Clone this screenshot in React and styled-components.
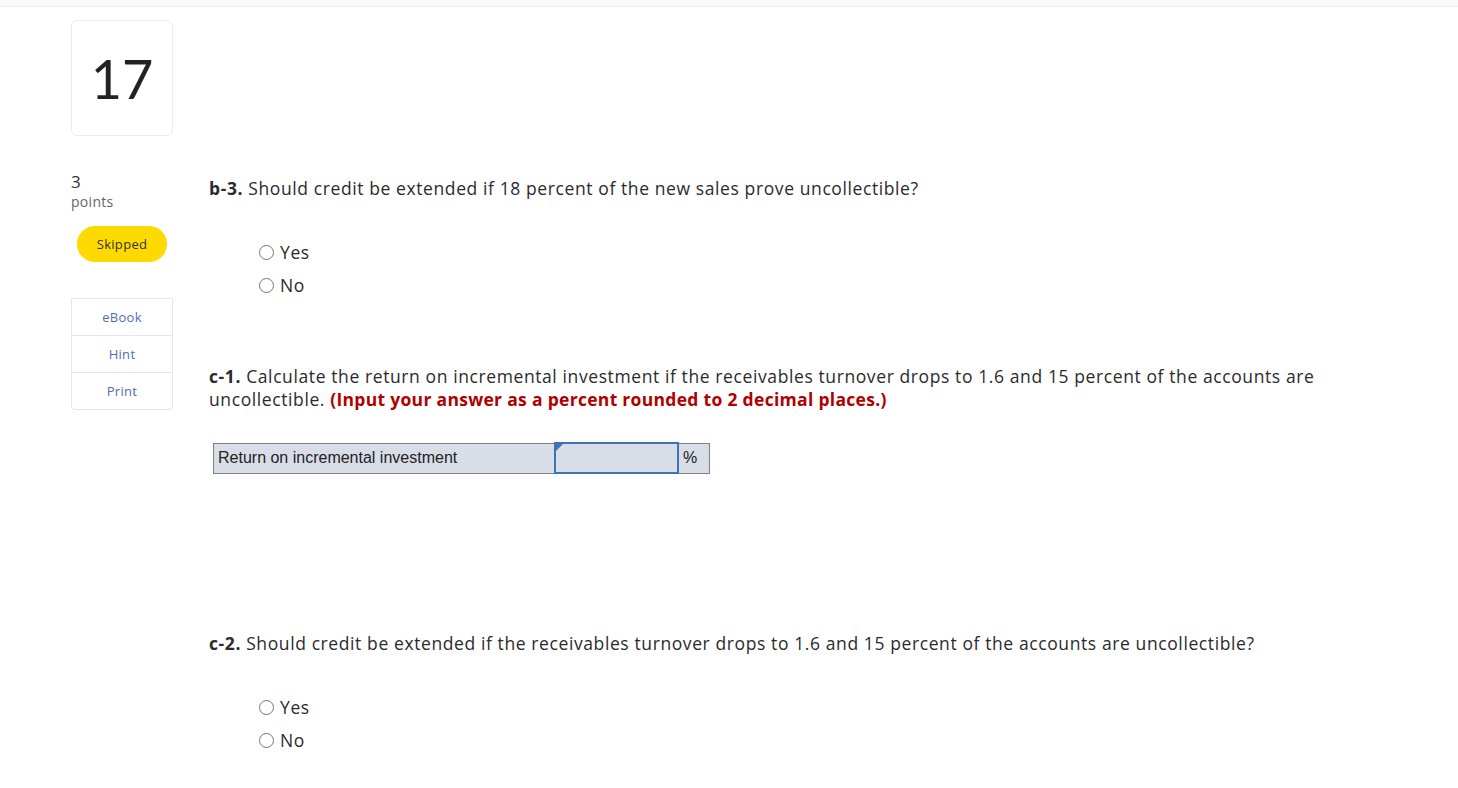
import React from "react";
import styled, { createGlobalStyle } from "styled-components";

const GlobalStyle = createGlobalStyle`
	body {
		margin: 0;
		background: #fff;
		font-family: "Open Sans", "Liberation Sans", sans-serif;
		color: #222;
	}
`;

const TopBar = styled.div`
	height: 6px;
	background: #fafafa;
	border-bottom: 1px solid #ececec;
`;

const Page = styled.main`
	padding: 13px 0 0 71px;
`;

const NumberCard = styled.div`
	width: 100px;
	height: 114px;
	border: 1px solid #ececec;
	border-radius: 6px;
	display: flex;
	align-items: center;
	justify-content: center;
	font-family: "Lato", sans-serif;
	font-size: 54px;
	color: #222;
`;

const Row = styled.div`
	display: flex;
	gap: 36px;
	margin-top: 36px;
`;

const Side = styled.aside`
	width: 102px;
	flex-shrink: 0;
`;

const Points = styled.div`
	font-size: 17px;
	line-height: 20px;
	color: #333;
	span {
		display: block;
		font-size: 14px;
		color: #666;
		letter-spacing: 0.3px;
	}
`;

const Pill = styled.div`
	margin: 14px 0 0 6px;
	width: 90px;
	height: 36px;
	border-radius: 18px;
	background: #ffda00;
	display: flex;
	align-items: center;
	justify-content: center;
	font-size: 13px;
	letter-spacing: 0.3px;
	color: #333;
`;

const Tools = styled.ul`
	list-style: none;
	margin: 36px 0 0;
	padding: 0;
	border: 1px solid #e6e6e6;
	border-radius: 0 0 4px 4px;
`;

const Tool = styled.li`
	height: 36px;
	display: flex;
	align-items: center;
	justify-content: center;
	font-size: 13px;
	letter-spacing: 0.3px;
	color: #4b6fae;
	& + & {
		border-top: 1px solid #e6e6e6;
	}
`;

const Content = styled.section`
	padding-top: 5px;
	flex: 1;
	font-size: 17.5px;
	line-height: 23px;
	letter-spacing: 0.6px;
	color: #2b2b2b;
`;

const Prompt = styled.p`
	margin: ${(p) => p.$top || 0}px 0 0;
	max-width: 1120px;
	b {
		font-weight: 700;
	}
`;

const Note = styled.strong`
	color: #b00000;
	font-weight: 700;
	letter-spacing: 0.3px;
`;

const Options = styled.div`
	margin: 36px 0 0 50px;
`;

const Option = styled.label`
	display: flex;
	align-items: center;
	height: 33px;
	gap: 6px;
`;

const Circle = styled.span`
	width: 15px;
	height: 15px;
	border: 1px solid #767676;
	border-radius: 50%;
	box-sizing: border-box;
`;

const AnswerTable = styled.table`
	margin: 31px 0 0 4px;
	border-collapse: collapse;
	font-family: "Liberation Sans", Arial, sans-serif;
	font-size: 16px;
	line-height: 18px;
	letter-spacing: 0;
	color: #222;
	td {
		border: 1px solid #808080;
		background: #d9dde7;
		height: 28px;
		padding: 0 4px;
	}
`;

const InputCell = styled.td`
	position: relative;
	width: 113px;
	&& {
		border: 2px solid #3f72b8;
	}
	&::before {
		content: "";
		position: absolute;
		left: 0;
		top: 0;
		border-left: 7px solid #3f72b8;
		border-bottom: 7px solid transparent;
	}
`;

function Choices() {
	return (
		<Options>
			<Option>
				<Circle /> Yes
			</Option>
			<Option>
				<Circle /> No
			</Option>
		</Options>
	);
}

export default function App() {
	return (
		<>
			<GlobalStyle />
			<TopBar />
			<Page>
				<NumberCard>17</NumberCard>
				<Row>
					<Side>
						<Points>
							3<span>points</span>
						</Points>
						<Pill>Skipped</Pill>
						<Tools>
							<Tool>eBook</Tool>
							<Tool>Hint</Tool>
							<Tool>Print</Tool>
						</Tools>
					</Side>
					<Content>
						<Prompt>
							<b>b-3.</b> Should credit be extended if 18 percent of the new sales prove uncollectible?
						</Prompt>
						<Choices />
						<Prompt $top={63}>
							<b>c-1.</b> Calculate the return on incremental investment if the receivables turnover drops to 1.6 and 15 percent of the accounts are uncollectible.{" "}
							<Note>(Input your answer as a percent rounded to 2 decimal places.)</Note>
						</Prompt>
						<AnswerTable>
							<tbody>
								<tr>
									<td style={{ width: 332 }}>Return on incremental investment</td>
									<InputCell />
									<td style={{ width: 22 }}>%</td>
								</tr>
							</tbody>
						</AnswerTable>
						<Prompt $top={158}>
							<b>c-2.</b> Should credit be extended if the receivables turnover drops to 1.6 and 15 percent of the accounts are uncollectible?
						</Prompt>
						<Choices />
					</Content>
				</Row>
			</Page>
		</>
	);
}
